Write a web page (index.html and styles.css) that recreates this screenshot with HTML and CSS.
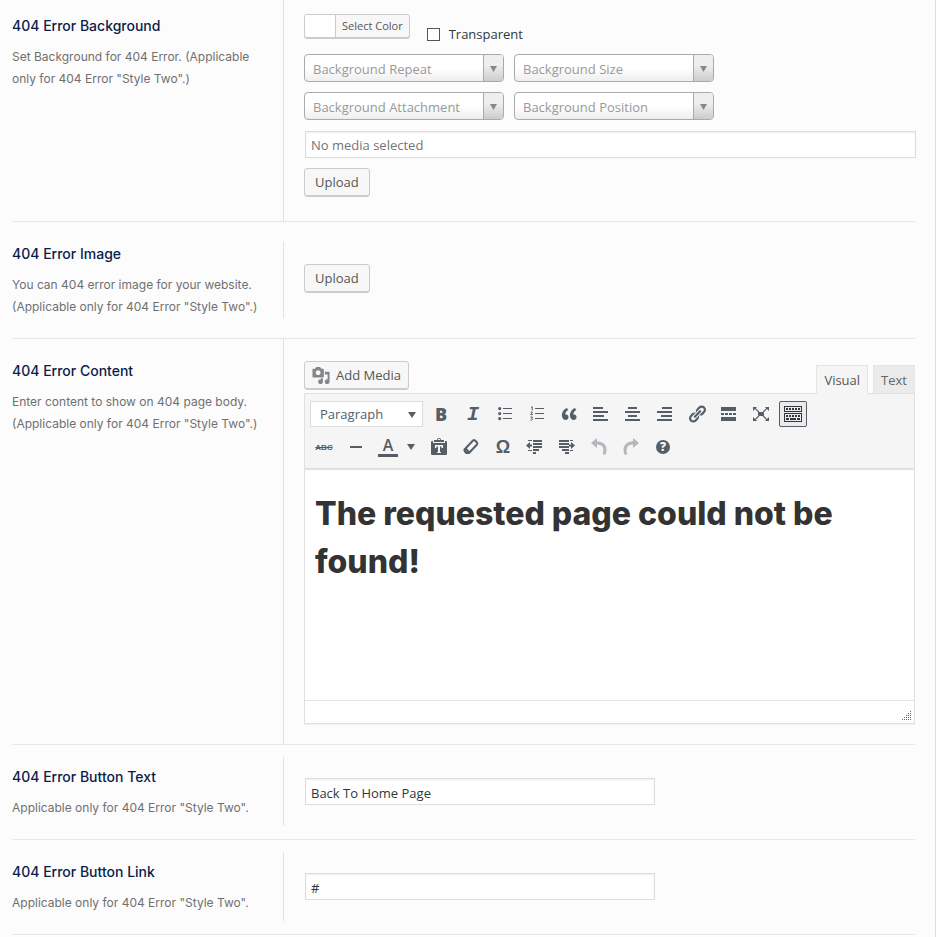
FILE: index.html
```html
<!DOCTYPE html>
<html lang="en">
<head>
<meta charset="utf-8">
<title>404 Error Settings</title>
<link rel="stylesheet" href="styles.css">
</head>
<body>
<main class="panel">
  <section class="row">
    <div class="label label-first">
      <h2>404 Error Background</h2>
      <p>Set Background for 404 Error. (Applicable only for 404 Error "Style Two".)</p>
    </div>
    <div class="field field-first">
      <div class="color-line">
        <button type="button" class="color-button"><span class="swatch"></span><span class="color-text">Select Color</span></button>
        <label class="check"><input type="checkbox">Transparent</label>
      </div>
      <div class="selects">
        <div class="select"><select aria-label="Background Repeat"><option>Background Repeat</option></select></div>
        <div class="select"><select aria-label="Background Size"><option>Background Size</option></select></div>
        <div class="select"><select aria-label="Background Attachment"><option>Background Attachment</option></select></div>
        <div class="select"><select aria-label="Background Position"><option>Background Position</option></select></div>
      </div>
      <input class="input media" type="text" placeholder="No media selected" aria-label="Background image" readonly>
      <button type="button" class="button">Upload</button>
    </div>
  </section>

  <section class="row">
    <div class="label label-image">
      <h2>404 Error Image</h2>
      <p>You can 404 error image for your website. (Applicable only for 404 Error "Style Two".)</p>
    </div>
    <div class="field field-image">
      <button type="button" class="button">Upload</button>
    </div>
  </section>

  <section class="row">
    <div class="label label-content">
      <h2>404 Error Content</h2>
      <p>Enter content to show on 404 page body. (Applicable only for 404 Error "Style Two".)</p>
    </div>
    <div class="field field-content">
      <div class="editor-head">
        <button type="button" class="button add-media">
          <svg viewBox="0 0 20 20"><path fill-rule="evenodd" d="M13 11V4c0-.55-.45-1-1-1h-1.67L9 1H5L3.67 3H2c-.55 0-1 .45-1 1v7c0 .55.45 1 1 1h10c.55 0 1-.45 1-1zM7 4.5c1.38 0 2.5 1.12 2.5 2.5S8.38 9.5 7 9.5 4.5 8.38 4.5 7 5.62 4.5 7 4.5zM14 6h5v10.5c0 1.38-1.12 2.5-2.5 2.5S14 17.88 14 16.5s1.12-2.5 2.5-2.5c.17 0 .34.02.5.05V9h-3V6zm-4 8.05V13h2v3.5c0 1.38-1.12 2.5-2.5 2.5S7 17.88 7 16.5 8.12 14 9.5 14c.17 0 .34.02.5.05z"/></svg>Add Media</button>
        <div class="tabs">
          <button type="button" class="tab tab-active">Visual</button>
          <button type="button" class="tab">Text</button>
        </div>
      </div>
      <div class="editor">
        <div class="toolbar">
          <div class="tools">
            <div class="format"><select aria-label="Format"><option>Paragraph</option></select></div>
            <button type="button" class="tool glyph-bold" aria-label="Bold">B</button>
            <button type="button" class="tool glyph-italic" aria-label="Italic">I</button>
            <button type="button" class="tool" aria-label="Bulleted list"><svg viewBox="0 0 20 20"><path d="M8 4h9v1H8zM8 9h9v1H8zM8 14h9v1H8z"/><circle cx="4.7" cy="4.6" r="1.6"/><circle cx="4.7" cy="9.6" r="1.6"/><circle cx="4.7" cy="14.6" r="1.6"/></svg></button>
            <button type="button" class="tool" aria-label="Numbered list"><svg viewBox="0 0 20 20"><path d="M8 4h9v1H8zM8 9h9v1H8zM8 14h9v1H8z"/><path class="line" d="M4 3.5l1.2-.8v3.8M3.6 8.3q1.8-1 1.8.3 0 .6-1.8 2h2.2M3.6 13h1.8l-1 1.2q1.3.2 1 1.3-.5 1-2 .5"/></svg></button>
            <button type="button" class="tool" aria-label="Blockquote"><svg viewBox="0 0 20 20"><path d="M9.49 13.22c0-.74-.2-1.38-.61-1.9-.62-.78-1.83-.88-2.53-.72-.29-1.65 1.11-3.75 2.92-4.65L7.88 4c-2.73 1.3-5.42 4.28-4.96 8.05C3.21 14.43 4.59 16 6.54 16c.85 0 1.56-.25 2.12-.75s.83-1.18.83-2.03zm8.05 0c0-.74-.2-1.38-.61-1.9-.63-.78-1.83-.88-2.53-.72-.29-1.65 1.11-3.75 2.92-4.65L15.93 4c-2.73 1.3-5.41 4.28-4.95 8.05.28 2.38 1.66 3.95 3.61 3.95.85 0 1.56-.25 2.12-.75s.83-1.18.83-2.03z"/></svg></button>
            <button type="button" class="tool" aria-label="Align left"><svg viewBox="0 0 20 20"><path d="M2 3h10v2H2zM2 7h15v2H2zM2 11h11v2H2zM2 15h15v2H2z"/></svg></button>
            <button type="button" class="tool" aria-label="Align center"><svg viewBox="0 0 20 20"><path d="M5 3h9v2H5zM2 7h15v2H2zM5 11h9v2H5zM2 15h15v2H2z"/></svg></button>
            <button type="button" class="tool" aria-label="Align right"><svg viewBox="0 0 20 20"><path d="M7 3h10v2H7zM2 7h15v2H2zM6 11h11v2H6zM2 15h15v2H2z"/></svg></button>
            <button type="button" class="tool" aria-label="Insert link"><svg viewBox="0 0 20 20"><path d="M17.74 2.76c1.68 1.69 1.68 4.41 0 6.1l-1.53 1.52c-1.12 1.12-2.7 1.47-4.14 1.09l2.62-2.61.76-.77.76-.76c.84-.84.84-2.2 0-3.04-.84-.85-2.2-.85-3.04 0l-.77.76-3.38 3.38c-.37-1.44-.02-3.02 1.1-4.14l1.52-1.53c1.69-1.68 4.42-1.68 6.1 0zM8.59 13.43l5.34-5.34c.42-.42.42-1.1 0-1.52-.44-.43-1.13-.39-1.53 0l-5.33 5.34c-.42.42-.42 1.1 0 1.52.44.43 1.13.39 1.52 0zm-.76 2.29l4.14-4.15c.38 1.44.03 3.02-1.09 4.14l-1.52 1.53c-1.69 1.68-4.41 1.68-6.1 0-1.68-1.68-1.68-4.42 0-6.1l1.53-1.52c1.12-1.12 2.7-1.47 4.14-1.1l-4.14 4.15c-.85.84-.85 2.2 0 3.05.84.84 2.2.84 3.04 0z"/></svg></button>
            <button type="button" class="tool" aria-label="Read more"><svg viewBox="0 0 20 20"><path d="M2 3h15v4H2zM2 9h3v2H2zM6 9h3v2H6zM10 9h3v2h-3zM14 9h3v2h-3zM2 13h15v4H2z"/></svg></button>
            <button type="button" class="tool" aria-label="Fullscreen"><svg viewBox="0 0 20 20"><path d="M7 8h6v4H7zM2 3h4L4.800 4.200l3.400 3.400-.8.800L4 5 2 7zM18 3h-4l1.200 1.200-3.400 3.400.8.800L16 5l2 2zM2 17h4l-1.200-1.200 3.400-3.400-.8-.8L4 15l-2-2zM18 17h-4l1.200-1.200-3.400-3.400.8-.8L16 15l2-2z"/></svg></button>
            <button type="button" class="tool tool-on" aria-label="Toolbar toggle"><svg viewBox="0 0 20 20"><path fill-rule="evenodd" d="M1 2h18v6H1zM2 3v4h16V3zM1 9h18v9H1zM2 10v7h16v-7z"/><path d="M3 4h2v2H3zM6 4h2v2H6zM9 4h2v2H9zM12 4h2v2h-2zM15 4h2v2h-2zM3 11h2v2H3zM6 11h2v2H6zM9 11h2v2H9zM12 11h2v2h-2zM15 11h2v2h-2zM3 14h3v2H3zM7 14h6v2H7zM14 14h3v2h-3z"/></svg></button>
          </div>
          <div class="tools">
            <button type="button" class="tool glyph-strike" aria-label="Strikethrough">ABC</button>
            <button type="button" class="tool" aria-label="Horizontal line"><svg viewBox="0 0 20 20"><path d="M4 9h12v2H4z"/></svg></button>
            <button type="button" class="tool tool-color" aria-label="Text color"><span class="glyph-color">A</span><span class="caret"></span></button>
            <button type="button" class="tool" aria-label="Paste as text"><svg viewBox="0 0 20 20"><path fill-rule="evenodd" d="M3 4h1v2h12V4h1q1 0 1 1v12q0 1-1 1H3q-1 0-1-1V5q0-1 1-1zM6 8v3h1.500V9.500H9V15H8v1h4v-1h-1V9.500h1.500V11H14V8z"/><path fill-rule="evenodd" d="M5 5V3h3q0-2 2-2t2 2h3v2zM9 3h2V2H9z"/></svg></button>
            <button type="button" class="tool" aria-label="Clear formatting"><svg viewBox="0 0 20 20"><path class="stroke" d="M3.500 12.500L12 3.500q1-.8 2 0l2 2q.8 1 0 2L8 16H6l-2.500-2.500z"/><path d="M3 12l4 4-1 1H5l-2-2z"/><path class="stroke" d="M4.500 11.500l4 4"/></svg></button>
            <button type="button" class="tool glyph-omega" aria-label="Special character">Ω</button>
            <button type="button" class="tool" aria-label="Decrease indent"><svg viewBox="0 0 20 20"><path d="M3 3h4v1H3zM8 3h9v2H8zM8 6h9v2H8zM8 9h9v2H8zM8 12h6v2H8zM3 13h4v1H3zM8 15h3v2H8zM1 8.500L5 5v2.500h2v2H5V12z"/></svg></button>
            <button type="button" class="tool" aria-label="Increase indent"><svg viewBox="0 0 20 20"><path d="M2 3h10v2H2zM13 3h3v1h-3zM2 6h10v2H2zM2 9h10v2H2zM5 12h7v2H5zM13 13h3v1h-3zM8 15h4v2H8zM18 8.500L14 5v2.500h-2v2h2V12z"/></svg></button>
            <button type="button" class="tool tool-off" aria-label="Undo" disabled><svg viewBox="0 0 20 20"><path d="M8 1v3.200q9.500.8 9.500 8.800 0 2-.8 4.500h-3Q16.500 8 8 7.600V11L2 6z"/></svg></button>
            <button type="button" class="tool tool-off" aria-label="Redo" disabled><svg viewBox="0 0 20 20"><path d="M12 1v3.200q-9.500.8-9.500 8.800 0 2 .8 4.500h3Q3.500 8 12 7.600V11l6-5z"/></svg></button>
            <button type="button" class="tool glyph-help" aria-label="Help"><span>?</span></button>
          </div>
        </div>
        <div class="canvas" contenteditable="true" role="textbox" aria-label="404 page body"><h1>The requested page could not be found!</h1></div>
        <div class="status"><svg viewBox="0 0 10 10"><path d="M8 0h1v1H8zM6 2h1v1H6zM8 2h1v1H8zM4 4h1v1H4zM6 4h1v1H6zM8 4h1v1H8zM2 6h1v1H2zM4 6h1v1H4zM6 6h1v1H6zM8 6h1v1H8zM0 8h1v1H0zM2 8h1v1H2zM4 8h1v1H4zM6 8h1v1H6zM8 8h1v1H8z"/></svg></div>
      </div>
    </div>
  </section>

  <section class="row">
    <div class="label label-input">
      <h2><label for="button-text">404 Error Button Text</label></h2>
      <p>Applicable only for 404 Error "Style Two".</p>
    </div>
    <div class="field field-input">
      <input class="input" id="button-text" type="text" value="Back To Home Page">
    </div>
  </section>

  <section class="row">
    <div class="label label-input">
      <h2><label for="button-link">404 Error Button Link</label></h2>
      <p>Applicable only for 404 Error "Style Two".</p>
    </div>
    <div class="field field-input">
      <input class="input" id="button-link" type="text" value="#">
    </div>
  </section>
</main>
</body>
</html>
```

FILE: styles.css
```css
* { box-sizing: border-box; }

body {
  margin: 0;
  background: #fcfcfc;
  color: #32373c;
  font: 13px/20px "Open Sans", "Noto Sans", sans-serif;
}

button, input, select { font: inherit; color: inherit; margin: 0; }
button { cursor: pointer; }
svg { display: block; width: 20px; height: 20px; fill: currentColor; }

.panel {
  min-height: 100vh;
  padding: 0 20px 0 12px;
  border-right: 1px solid #dedede;
}

.row {
  display: grid;
  grid-template-columns: 272px minmax(0, 1fr);
  column-gap: 20px;
  border-bottom: 1px solid #e7e7e7;
}

.label {
  padding-right: 12px;
  border-right: 1px solid #e2e2e2;
  font-family: Inter, sans-serif;
}
.label h2 { margin: 0 0 10px; font-size: 14px; font-weight: 500; line-height: 20px; color: #0b1c4a; }
.label p { margin: 0; font-size: 12px; line-height: 22px; color: #707070; }
.label-first { padding-top: 16px; }
.label-image { margin: 20px 0; padding-top: 2px; }
.label-content { padding-top: 22px; }
.label-input { margin: 12px 0 13px; padding: 10px 0 7px; }

.field-first { padding: 14px 0 24px; }
.field-image { padding-top: 42px; }
.field-content { padding: 22px 0 20px; }
.field-input { padding-top: 32px; }

.button {
  display: block;
  height: 29px;
  padding: 0 10px 1px;
  border: 1px solid #ccc;
  border-radius: 3px;
  background: #f7f7f7;
  box-shadow: inset 0 -1px 0 #ccc;
  color: #555;
  line-height: 26px;
}

.color-line { display: flex; align-items: flex-start; gap: 17px; margin-bottom: 10px; }
.color-button {
  display: flex;
  height: 24px;
  padding: 0;
  border: 1px solid #ccc;
  border-radius: 3px;
  background: #f7f7f7;
  box-shadow: 0 1px 0 #ccc;
  color: #555;
  font-size: 11px;
  line-height: 22px;
}
.swatch { width: 31px; height: 22px; border-right: 1px solid #ccc; border-radius: 2px 0 0 2px; background: #fff; }
.color-text { padding: 0 6px; }
.check { display: flex; align-items: center; gap: 9px; padding-top: 10px; }
.check input { width: 13px; height: 13px; appearance: none; border: 1px solid #555; background: #fff; }

.selects { display: grid; grid-template-columns: 200px 200px; gap: 10px; }
.select { position: relative; }
.select select {
  display: block;
  width: 100%;
  height: 28px;
  padding: 2px 24px 0 8px;
  appearance: none;
  border: 1px solid #aaa;
  border-radius: 4px;
  background: linear-gradient(#fff 50%, #eee);
  color: #999;
}
.select::before {
  content: "";
  position: absolute;
  inset: 1px 1px 1px auto;
  width: 19px;
  border-left: 1px solid #aaa;
  border-radius: 0 3px 3px 0;
  background: linear-gradient(#eee 40%, #ccc);
  pointer-events: none;
}
.select::after, .format::after, .caret {
  width: 8px;
  height: 6px;
  clip-path: polygon(0 0, 100% 0, 50% 100%);
  background: #555d66;
  pointer-events: none;
}
.select::after { content: ""; position: absolute; top: 12px; right: 7px; width: 7px; background: #888; }

.input {
  display: block;
  width: 100%;
  max-width: 350px;
  height: 27px;
  margin: 1px;
  padding: 4px 5px 2px;
  border: 1px solid #ddd;
  border-radius: 0;
  background: #fff;
  box-shadow: inset 0 1px 2px rgba(0, 0, 0, .07);
}
.input.media { max-width: none; margin: 11px 1px 10px; padding: 3px 5px; }
.input::placeholder { color: #757575; opacity: 1; }

.editor-head { display: flex; justify-content: space-between; height: 32px; }
.add-media { display: flex; align-items: center; gap: 5px; padding: 0 7px 1px 6px; }
.add-media svg { width: 20px; height: 19px; fill: #82878c; }
.tabs { display: flex; gap: 5px; padding-top: 4px; }
.tab {
  height: 28px;
  padding: 0 7px;
  border: 1px solid #e5e5e5;
  border-bottom: 0;
  background: #ebebeb;
  color: #666;
  line-height: 26px;
}
.tab-active { position: relative; height: 29px; padding: 0 7px 1px; background: #f5f5f5; color: #555; }

.editor { border: 1px solid #e0e0e0; background: #fff; box-shadow: 0 1px 1px rgba(0, 0, 0, .04); }
.toolbar { padding: 6px 5px 7px; border-bottom: 1px solid #ddd; background: #f5f5f5; box-shadow: 0 1px 1px #e5e5e5; }
.tools { display: flex; flex-wrap: wrap; align-items: center; gap: 4px; min-height: 28px; margin-bottom: 5px; }
.tools:last-child { margin-bottom: 0; }
.tool {
  display: flex;
  align-items: center;
  justify-content: center;
  width: 28px;
  height: 26px;
  padding: 0;
  border: 1px solid transparent;
  border-radius: 2px;
  background: none;
  color: #555d66;
}
.tool-on { border-color: #555d66; background: #ebebeb; color: #32373c; }
.tool-off { color: #b4b8bc; }
.tool-color { width: 47px; gap: 9px; padding-right: 2px; }
.line { fill: none; stroke: currentColor; stroke-width: 1; }
.stroke { fill: none; stroke: currentColor; stroke-width: 2; }
.format { position: relative; width: 113px; }
.format select {
  display: block;
  width: 100%;
  height: 26px;
  padding: 0 20px 0 9px;
  appearance: none;
  border: 1px solid #ddd;
  border-radius: 0;
  background: #fff;
  color: #555d66;
}
.format::after { content: ""; position: absolute; top: 11px; right: 7px; }
.glyph-bold { font-size: 18px; font-weight: 800; }
.glyph-italic { font: italic bold 20px "Liberation Mono", monospace; }
.glyph-strike { font: bold 8px "Liberation Sans", sans-serif; text-decoration: line-through; }
.glyph-color { width: 20px; border-bottom: 3px solid; font-size: 16px; font-weight: 600; line-height: 17px; }
.glyph-omega { font: bold 18px "Liberation Sans", sans-serif; }
.glyph-help span { width: 14px; height: 14px; border-radius: 50%; background: #555d66; color: #f5f5f5; font-size: 12px; font-weight: 800; line-height: 14px; }

.canvas { min-height: 231px; padding: 21px 10px; outline: 0; }
.canvas h1 { margin: 0; color: #333; font: 800 32px/48px Inter, sans-serif; }
.status { display: flex; align-items: flex-end; justify-content: flex-end; height: 23px; padding: 2px; border-top: 1px solid #e5e5e5; }
.status svg { width: 10px; height: 10px; fill: #666; }
```
